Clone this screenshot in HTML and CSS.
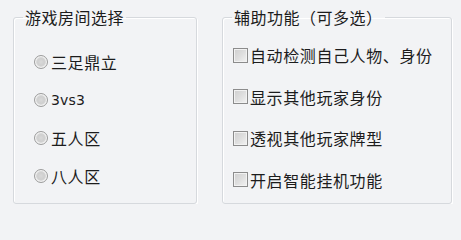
FILE: index.html
```html
<!DOCTYPE html>
<html lang="zh-CN">
<head>
<meta charset="utf-8">
<title>设置</title>
<link rel="stylesheet" href="styles.css">
</head>
<body>
<div class="panel">
  <fieldset class="group group-left">
    <legend class="title">游戏房间选择</legend>
    <div class="list list-radio">
      <label class="opt"><span class="radio"></span><span class="txt">三足鼎立</span></label>
      <label class="opt"><span class="radio"></span><span class="txt latin">3vs3</span></label>
      <label class="opt"><span class="radio"></span><span class="txt">五人区</span></label>
      <label class="opt"><span class="radio"></span><span class="txt">八人区</span></label>
    </div>
  </fieldset>
  <fieldset class="group group-right">
    <legend class="title">辅助功能（可多选）</legend>
    <div class="list list-check">
      <label class="opt"><span class="check"></span><span class="txt">自动检测自己人物、身份</span></label>
      <label class="opt"><span class="check"></span><span class="txt">显示其他玩家身份</span></label>
      <label class="opt"><span class="check"></span><span class="txt">透视其他玩家牌型</span></label>
      <label class="opt"><span class="check"></span><span class="txt">开启智能挂机功能</span></label>
    </div>
  </fieldset>
</div>
</body>
</html>
```

FILE: styles.css
```css
html, body {
  margin: 0;
  padding: 0;
  background: #f2f3f5;
}
body {
  font-family: "Noto Sans CJK SC", "Noto Sans", sans-serif;
  color: #1c1c1c;
  font-size: 16px;
}
.panel {
  display: flex;
  gap: 25px;
  padding: 8px 0 0 13px;
}
.group {
  box-sizing: border-box;
  margin: 0;
  padding: 0;
  border: 1px solid #d6d9dd;
  border-radius: 3px;
  box-shadow: inset 1px 1px 0 #ffffff, 1px 1px 0 #ffffff;
  height: 196px;
}
.group-left { width: 184px; }
.group-right { width: 230px; }
.title {
  margin-left: 9px;
  padding: 0 2px;
  font-size: 16px;
  line-height: 18px;
  height: 18px;
  letter-spacing: 0.5px;
}
.list {
  display: flex;
  flex-direction: column;
}
.list-radio {
  padding: 26px 0 0 20px;
  gap: 18px;
}
.list-check {
  padding: 19px 0 0 10px;
  gap: 21.5px;
}
.opt {
  display: flex;
  align-items: center;
  height: 20px;
  line-height: 20px;
}
.txt {
  font-size: 16px;
  letter-spacing: 0.6px;
  white-space: nowrap;
}
.latin {
  font-family: "DejaVu Sans", sans-serif;
  font-size: 14px;
  letter-spacing: 0.2px;
}
.radio {
  box-sizing: border-box;
  width: 14px;
  height: 14px;
  border-radius: 50%;
  border: 1px solid #9c9c9c;
  background: radial-gradient(circle at 50% 50%, #d9d9d9 0, #cfcfcf 40%, #e6e6e6 75%, #f6f6f6 100%);
  box-shadow: inset 0 0 0 1px #f4f4f4;
  margin-right: 3px;
  flex: none;
}
.check {
  box-sizing: border-box;
  width: 15px;
  height: 15px;
  border: 1px solid #8c8c8c;
  background: linear-gradient(135deg, #cfcfcf 0%, #dedede 50%, #f3f3f3 100%);
  box-shadow: inset 0 0 0 1px #f2f2f2;
  margin-right: 2px;
  flex: none;
}
```
